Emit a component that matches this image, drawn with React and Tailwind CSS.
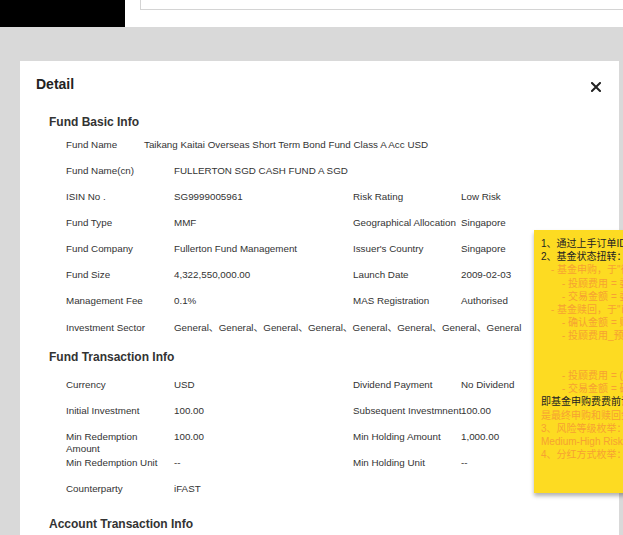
import React from "react";

const basicRows = [
  ["Fund Name(cn)", "FULLERTON SGD CASH FUND A SGD", "", ""],
  ["ISIN No .", "SG9999005961", "Risk Rating", "Low Risk"],
  ["Fund Type", "MMF", "Geographical Allocation", "Singapore"],
  ["Fund Company", "Fullerton Fund Management", "Issuer's Country", "Singapore"],
  ["Fund Size", "4,322,550,000.00", "Launch Date", "2009-02-03"],
  ["Management Fee", "0.1%", "MAS Registration", "Authorised"],
];

const txRows = [
  ["Currency", "USD", "Dividend Payment", "No Dividend"],
  ["Initial Investment", "100.00", "Subsequent Investmnent", "100.00"],
  ["Min Redemption Amount", "100.00", "Min Holding Amount", "1,000.00"],
  ["Min Redemption Unit", "--", "Min Holding Unit", "--"],
  ["Counterparty", "iFAST", "", ""],
];

// [colour, indent level, text]
const noteLines = [
  ["k", 0, "1、通过上手订单ID关联原订单"],
  ["k", 0, "2、基金状态扭转："],
  ["o", 1, "- 基金申购，于\"待确认\"状态"],
  ["o", 2, "- 投顾费用 = 委托金额 x 费率"],
  ["o", 2, "- 交易金额 = 委托金额 - 投顾费用"],
  ["o", 1, "- 基金赎回，于\"已确认\"状态"],
  ["o", 2, "- 确认金额 = 赎回份额 x 净值"],
  ["o", 2, "- 投顾费用_预估 = 确认金额 x 费率"],
  ["o", 0, " "],
  ["o", 0, " "],
  ["o", 2, "- 投顾费用 = (确认金额) x 费率"],
  ["o", 2, "- 交易金额 = 确认金额 - 投顾费用"],
  ["k", 0, "即基金申购费费前计算"],
  ["o", 0, "是最终申购和赎回金额"],
  ["o", 0, "3、风险等级枚举：Low Risk/"],
  ["o", 0, "Medium-High Risk/High Risk"],
  ["o", 0, "4、分红方式枚举：Cash/Reinvest"],
];

const indent = ["pl-0", "pl-[10px]", "pl-[21px]"];

const Row = ({ row }) => (
  <div className="grid grid-cols-[108px_179px_108px_1fr] h-[26px] items-start pt-[7px] leading-[12px]">
    <div className="pr-[6px]">{row[0]}</div>
    <div>{row[1]}</div>
    <div className="whitespace-nowrap">{row[2]}</div>
    <div>{row[3]}</div>
  </div>
);

export default function App() {
  return (
    <div
      className="w-screen h-screen overflow-hidden flex flex-col bg-[#d9d9d9] text-[#333]"
      style={{ fontFamily: '"Liberation Sans", Arial, "Noto Sans CJK SC", sans-serif' }}
    >
      {/* top bar */}
      <div className="flex h-[27px] bg-white shrink-0">
        <div className="w-[125px] h-full bg-black"></div>
        <div className="flex-1 pl-[15px]">
          <div className="h-[10px] border-l border-b border-[#d4d4d4]"></div>
        </div>
      </div>

      <div className="flex-1 pt-[34px] pl-[20px] pr-[4px]">
        <div className="relative bg-white h-full pt-[12px] pl-[16px]">
          {/* header */}
          <div className="flex items-center justify-between pr-[18px]">
            <div className="text-[14px] font-bold leading-[22px] text-[#222]">Detail</div>
            <svg className="w-[10px] h-[10px] mt-[5px]" viewBox="0 0 10 10">
              <path d="M1 1L9 9M9 1L1 9" stroke="#222" strokeWidth="2" strokeLinecap="square" />
            </svg>
          </div>

          <div className="pl-[13px]">
            <div className="mt-[19px] text-[12px] font-bold leading-[16px]">Fund Basic Info</div>
            <div className="mt-[2px] pl-[17px] text-[9.8px]">
              <div className="flex h-[26px] items-start pt-[7px] leading-[12px]">
                <div className="w-[78px]">Fund Name</div>
                <div>Taikang Kaitai Overseas Short Term Bond Fund Class A Acc USD</div>
              </div>
              {basicRows.map((r, i) => (
                <Row key={i} row={r} />
              ))}
              <div className="flex h-[27px] items-start pt-[8px] leading-[12px]">
                <div className="w-[108px]">Investment Sector</div>
                <div>General、General、General、General、General、General、General、General</div>
              </div>
            </div>

            <div className="mt-[8px] text-[12px] font-bold leading-[16px]">Fund Transaction Info</div>
            <div className="mt-[7px] pl-[17px] text-[9.8px]">
              {txRows.map((r, i) => (
                <Row key={i} row={r} />
              ))}
            </div>

            <div className="mt-[14px] text-[12px] font-bold leading-[16px]">Account Transaction Info</div>
          </div>

          {/* sticky note */}
          <div className="absolute left-[514px] top-[169px] w-[200px] h-[263px] bg-[#fddb22] shadow-[0_3px_4px_rgba(0,0,0,0.3)] pt-[7px] pl-[7px] overflow-hidden">
            {noteLines.map(([c, lvl, t], i) => (
              <div
                key={i}
                className={`whitespace-pre text-[10px] leading-[13.2px] ${indent[lvl]} ${c === "k" ? "text-[#222]" : "text-[#f6a232]"}`}
              >
                {t}
              </div>
            ))}
          </div>
        </div>
      </div>
    </div>
  );
}
